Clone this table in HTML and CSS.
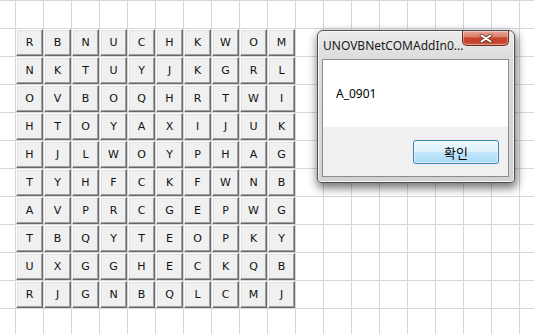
FILE: index.html
```html
<!DOCTYPE html>
<html>
<head>
<meta charset="utf-8">
<link rel="stylesheet" href="styles.css">
</head>
<body>
<div class="board">
  <div class="key">R</div><div class="key">B</div><div class="key">N</div><div class="key">U</div><div class="key">C</div><div class="key">H</div><div class="key">K</div><div class="key">W</div><div class="key">O</div><div class="key">M</div>
  <div class="key">N</div><div class="key">K</div><div class="key">T</div><div class="key">U</div><div class="key">Y</div><div class="key">J</div><div class="key">K</div><div class="key">G</div><div class="key">R</div><div class="key">L</div>
  <div class="key">O</div><div class="key">V</div><div class="key">B</div><div class="key">O</div><div class="key">Q</div><div class="key">H</div><div class="key">R</div><div class="key">T</div><div class="key">W</div><div class="key">I</div>
  <div class="key">H</div><div class="key">T</div><div class="key">O</div><div class="key">Y</div><div class="key">A</div><div class="key">X</div><div class="key">I</div><div class="key">J</div><div class="key">U</div><div class="key">K</div>
  <div class="key">H</div><div class="key">J</div><div class="key">L</div><div class="key">W</div><div class="key">O</div><div class="key">Y</div><div class="key">P</div><div class="key">H</div><div class="key">A</div><div class="key">G</div>
  <div class="key">T</div><div class="key">Y</div><div class="key">H</div><div class="key">F</div><div class="key">C</div><div class="key">K</div><div class="key">F</div><div class="key">W</div><div class="key">N</div><div class="key">B</div>
  <div class="key">A</div><div class="key">V</div><div class="key">P</div><div class="key">R</div><div class="key">C</div><div class="key">G</div><div class="key">E</div><div class="key">P</div><div class="key">W</div><div class="key">G</div>
  <div class="key">T</div><div class="key">B</div><div class="key">Q</div><div class="key">Y</div><div class="key">T</div><div class="key">E</div><div class="key">O</div><div class="key">P</div><div class="key">K</div><div class="key">Y</div>
  <div class="key">U</div><div class="key">X</div><div class="key">G</div><div class="key">G</div><div class="key">H</div><div class="key">E</div><div class="key">C</div><div class="key">K</div><div class="key">Q</div><div class="key">B</div>
  <div class="key">R</div><div class="key">J</div><div class="key">G</div><div class="key">N</div><div class="key">B</div><div class="key">Q</div><div class="key">L</div><div class="key">C</div><div class="key">M</div><div class="key">J</div>
</div>

<div class="dialog">
  <div class="titlebar">
    <span class="title">UNOVBNetCOMAddIn0...</span>
    <div class="close">
      <svg width="14" height="9" viewBox="0 0 14 9">
        <path d="M2.5 1.5 L11.5 7.5 M11.5 1.5 L2.5 7.5" stroke="#6b3a32" stroke-width="3.6" stroke-linecap="round"/>
        <path d="M2.5 1.5 L11.5 7.5 M11.5 1.5 L2.5 7.5" stroke="#ffffff" stroke-width="2" stroke-linecap="round"/>
      </svg>
    </div>
  </div>
  <div class="client">
    <div class="message">A_0901</div>
    <div class="footer">
      <div class="ok">확인</div>
    </div>
  </div>
</div>
</body>
</html>
```

FILE: styles.css
```css
html, body {
  margin: 0;
  padding: 0;
}
body {
  width: 534px;
  height: 334px;
  overflow: hidden;
  position: relative;
  background-color: #ffffff;
  background-image:
    linear-gradient(to right, #d5d7de 1px, transparent 1px),
    linear-gradient(to bottom, #d5d7de 1px, transparent 1px);
  background-size: 28px 28px;
  background-position: 15px 0;
  font-family: "DejaVu Sans", sans-serif;
}
.board {
  display: grid;
  grid-template-columns: repeat(10, 27px);
  grid-auto-rows: 27px;
  gap: 1px;
  padding: 29px 0 0 16px;
}
.key {
  box-sizing: border-box;
  background: #f0f0f0;
  border: 1px solid;
  border-color: #ffffff #6a6a6a #6a6a6a #ffffff;
  box-shadow: inset -1px -1px 0 #a0a0a0, inset 1px 1px 0 #e3e3e3;
  display: flex;
  align-items: center;
  justify-content: center;
  font-family: "DejaVu Sans", sans-serif;
  font-size: 11px;
  color: #111;
}
.dialog {
  position: absolute;
  left: 317px;
  top: 30px;
  width: 198px;
  height: 153px;
  box-sizing: border-box;
  border: 1px solid #505050;
  border-radius: 6px 6px 4px 4px;
  background: linear-gradient(to bottom, #ececec 0, #dcdcdc 28px, #d2d2d2 100%);
  box-shadow: 1px 4px 10px 1px rgba(0,0,0,0.55), inset 0 0 0 1px rgba(255,255,255,0.75);
  display: flex;
  flex-direction: column;
  padding: 0 5px 5px 4px;
}
.titlebar {
  height: 28px;
  flex: none;
  position: relative;
  display: flex;
  align-items: center;
  padding-left: 1px;
}
.title {
  font-family: "Noto Sans", sans-serif;
  font-size: 12px;
  color: #1a1a1a;
  margin-top: 1px;
}
.close {
  position: absolute;
  left: 140px;
  top: 0;
  width: 47px;
  height: 15px;
  box-sizing: border-box;
  border: 1px solid #6e2c22;
  border-top: none;
  border-radius: 0 0 5px 5px;
  background: linear-gradient(to bottom, #e8a898 0, #dc7f6c 40%, #c8452d 50%, #c4412a 80%, #d56a52 100%);
  box-shadow: inset 0 0 0 1px rgba(255,255,255,0.35);
  display: flex;
  align-items: center;
  justify-content: center;
}
.client {
  flex: 1;
  border: 1px solid #8c8c8c;
  background: #ffffff;
  display: flex;
  flex-direction: column;
}
.message {
  height: 67px;
  box-sizing: border-box;
  padding: 26px 0 0 13px;
  font-family: "Noto Sans", sans-serif;
  font-size: 12px;
  line-height: 16px;
  color: #000;
}
.footer {
  flex: 1;
  background: #f0f0f0;
  display: flex;
  justify-content: flex-end;
  align-items: flex-start;
  padding: 13px 9px 0 0;
}
.ok {
  width: 86px;
  height: 24px;
  box-sizing: border-box;
  border: 1px solid #3c7fb1;
  border-radius: 3px;
  background: linear-gradient(to bottom, #ecf7fd 0, #dcf1fc 48%, #c1e6fb 52%, #a9daf5 100%);
  box-shadow: inset 0 0 0 1px rgba(255,255,255,0.6);
  display: flex;
  align-items: center;
  justify-content: center;
  font-family: "Noto Sans CJK KR", sans-serif;
  font-size: 13px;
  color: #000;
}
```
